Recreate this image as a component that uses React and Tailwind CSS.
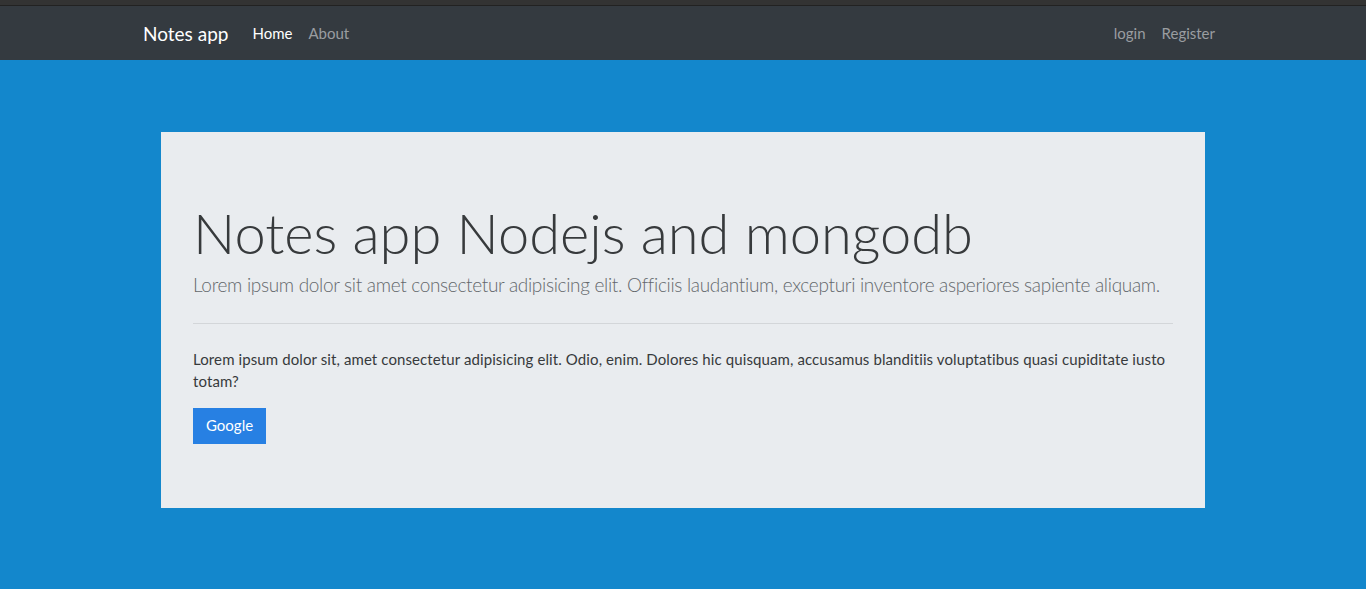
export default function App() {
  return (
    <div className="min-h-[589px] bg-[#1387cc]" style={{ fontFamily: 'Lato, "Open Sans", sans-serif' }}>
      <div className="h-[5px] bg-[#333333]" />
      <div className="h-px bg-[#222222]" />
      <nav className="h-[54px] bg-[#343a40] flex items-center">
        <div className="w-[1080px] mx-auto flex items-center">
          <a className="text-[19px] text-white mr-6 leading-none">Notes app</a>
          <a className="text-[15px] text-white leading-none">Home</a>
          <a className="text-[15px] text-[#9a9da0] ml-4 leading-none">About</a>
          <div className="flex-1" />
          <a className="text-[15px] text-[#9a9da0] leading-none">login</a>
          <a className="text-[15px] text-[#9a9da0] ml-4 mr-2 leading-none">Register</a>
        </div>
      </nav>
      <div className="pt-[72px]">
        <div className="w-[1044px] mx-auto bg-[#e9ecef] px-8 pt-[67px] h-[376px]">
          <h1 className="text-[56px] font-light text-[#373a3c] leading-[1.2]">Notes app Nodejs and mongodb</h1>
          <p className="text-[19px] font-light tracking-[-0.32px] text-[#64686c] mt-[5px]">Lorem ipsum dolor sit amet consectetur adipisicing elit. Officiis laudantium, excepturi inventore asperiores sapiente aliquam.</p>
          <hr className="mt-[23px] mb-6 border-t border-[#d3d6d9]" />
          <p className="text-[15px] tracking-[0.1px] text-[#373a3c] leading-[22px]">Lorem ipsum dolor sit, amet consectetur adipisicing elit. Odio, enim. Dolores hic quisquam, accusamus blanditiis voluptatibus quasi cupiditate iusto totam?</p>
          <button className="mt-4 bg-[#2780e3] text-white text-[15px] h-9 px-[13px]">Google</button>
        </div>
      </div>
    </div>
  );
}
